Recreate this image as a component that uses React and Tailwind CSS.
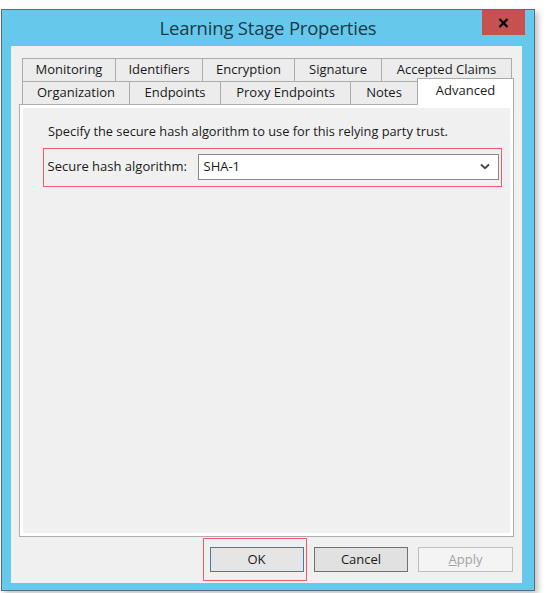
import React from "react";

const row1 = [
  { label: "Monitoring", w: "w-[93px]" },
  { label: "Identifiers", w: "w-[87px]" },
  { label: "Encryption", w: "w-[92px]" },
  { label: "Signature", w: "w-[87px]" },
  { label: "Accepted Claims", w: "w-[131px]" },
];

const row2 = [
  { label: "Organization", w: "w-[107px]" },
  { label: "Endpoints", w: "w-[91px]" },
  { label: "Proxy Endpoints", w: "w-[130px]" },
  { label: "Notes", w: "w-[67px]" },
];

const Tab = ({ label, w, last }) => (
  <div
    className={`${w} h-[23px] flex items-center justify-center border-t border-l border-[#acacac] bg-[#ececec] text-[13px] text-[#1a1a1a] ${
      last ? "border-r" : ""
    }`}
  >
    {label}
  </div>
);

export default function App() {
  return (
    <div
      className="w-[547px] h-[593px] bg-white pt-[9px] pl-[1px]"
      style={{ fontFamily: '"Open Sans", "Noto Sans", sans-serif' }}
    >
      <div className="w-[534px] h-[582px] border border-[#5b6d76] bg-[#66c9ec] flex flex-col shadow-[3px_3px_6px_rgba(0,0,0,0.25)]">
        {/* Title bar */}
        <div className="relative h-[36px] flex items-center justify-center">
          <span className="text-[18.5px] text-[#1b3a4b] tracking-[-0.2px] -mt-[1px]">
            Learning Stage Properties
          </span>
          <button className="absolute top-0 right-[9px] w-[43px] h-[25px] bg-[#c75050] flex items-center justify-center">
            <svg width="11" height="10" viewBox="0 0 11 10">
              <path d="M1.5 1 L9.5 9 M9.5 1 L1.5 9" stroke="#000" strokeWidth="2.4" />
            </svg>
          </button>
        </div>

        {/* Client area */}
        <div className="ml-[9px] mr-[12px] mb-[7px] flex-1 bg-[#f0f0f0] flex flex-col pt-[12px]">
          {/* Tabs */}
          <div className="pl-[11px]">
            <div className="flex">
              {row1.map((t, i) => (
                <Tab key={t.label} {...t} last={i === row1.length - 1} />
              ))}
            </div>
            <div className="flex items-end h-[23px]">
              {row2.map((t) => (
                <Tab key={t.label} {...t} />
              ))}
              <div className="relative z-10 w-[97px] h-[27px] -mb-px bg-white border-t border-l border-r border-[#acacac] flex justify-center pt-[2px] text-[13px] text-[#1a1a1a]">
                Advanced
              </div>
            </div>
          </div>

          {/* Panel */}
          <div className="mx-[8px] h-[433px] border border-[#adadad]">
            <div className="h-full border-[3px] border-white bg-[#f0f0f0] pt-[15px] pl-[20px]">
              <p className="pl-[5px] text-[12.8px] leading-[16px] text-[#1a1a1a]">
                Specify the secure hash algorithm to use for this relying party trust.
              </p>
              <div className="mt-[9px] w-[459px] h-[39px] border-[1.5px] border-[#ea5f6b] flex items-center pl-[3.5px] pr-[2px] pb-[2px]">
                <span className="w-[150px] text-[13px] text-[#1a1a1a]">Secure hash algorithm:</span>
                <div className="flex-1 h-[26px] border-[1.5px] border-[#888888] bg-white flex items-center pl-[5px] pr-[8px]">
                  <span className="flex-1 text-[13px] text-[#1a1a1a]">SHA-1</span>
                  <svg width="10" height="7" viewBox="0 0 10 7">
                    <path d="M1 1.5 L5 5.2 L9 1.5" stroke="#444" strokeWidth="1.8" fill="none" />
                  </svg>
                </div>
              </div>
            </div>
          </div>

          {/* Buttons */}
          <div className="mt-[1px] h-[43px] flex items-center justify-end pr-[9px]">
            <div className="h-[43px] border-[1.5px] border-[#ea5f6b] flex items-center pl-[5.5px] pr-[2.5px]">
              <button className="w-[94px] h-[25px] border border-[#3c7fb1] bg-[#e5e5e5] text-[13px] text-[#1a1a1a]">
                OK
              </button>
            </div>
            <button className="ml-[7px] w-[94px] h-[25px] border border-[#707070] bg-[#e1e1e1] text-[13px] text-[#1a1a1a]">
              Cancel
            </button>
            <button className="ml-[10px] w-[95px] h-[25px] border border-[#bfbfbf] bg-[#f4f4f4] text-[13px] text-[#a3a3a3]">
              <span className="underline">A</span>pply
            </button>
          </div>
        </div>
      </div>
    </div>
  );
}
